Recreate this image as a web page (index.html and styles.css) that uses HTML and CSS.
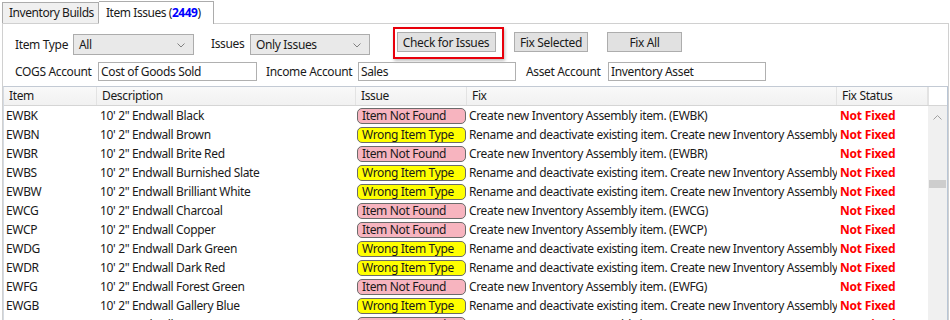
FILE: index.html
```html
<!DOCTYPE html>
<html>
<head>
<meta charset="utf-8">
<link rel="stylesheet" href="styles.css">
</head>
<body>
<div class="tabs">
  <div class="tab">Inventory Builds</div>
  <div class="tab tab-active">Item Issues (<b class="count">2449</b>)</div>
</div>
<div class="panel">
  <div class="row1">
    <span class="lbl lbl-type">Item Type</span>
    <div class="combo combo-type"><span>All</span><svg class="chev" width="8" height="5" viewBox="0 0 8 5"><polyline points="0.5,0.5 4,4 7.5,0.5" fill="none" stroke="#808080" stroke-width="1"/></svg></div>
    <span class="lbl lbl-issues">Issues</span>
    <div class="combo combo-issues"><span>Only Issues</span><svg class="chev" width="8" height="5" viewBox="0 0 8 5"><polyline points="0.5,0.5 4,4 7.5,0.5" fill="none" stroke="#808080" stroke-width="1"/></svg></div>
    <div class="mark"><button class="btn btn-check">Check for Issues</button></div>
    <button class="btn btn-sel">Fix Selected</button>
    <button class="btn btn-all">Fix All</button>
  </div>
  <div class="row2">
    <span class="lbl lbl-cogs">COGS Account</span>
    <div class="input in-cogs">Cost of Goods Sold</div>
    <span class="lbl lbl-income">Income Account</span>
    <div class="input in-income">Sales</div>
    <span class="lbl lbl-asset">Asset Account</span>
    <div class="input in-asset">Inventory Asset</div>
  </div>
  <div class="grid">
    <div class="ghead">
      <div class="c c-item">Item</div>
      <div class="c c-desc">Description</div>
      <div class="c c-issue">Issue</div>
      <div class="c c-fix">Fix</div>
      <div class="c c-status">Fix Status</div>
      <div class="c c-fill"></div>
    </div>
    <div class="gbody">
      <div class="rows">
        <div class="r"><div class="c c-item">EWBK</div><div class="c c-desc">10' 2" Endwall Black</div><div class="c c-issue"><span class="badge nf">Item Not Found</span></div><div class="c c-fix">Create new Inventory Assembly item. (EWBK)</div><div class="c c-status">Not Fixed</div></div>
        <div class="r"><div class="c c-item">EWBN</div><div class="c c-desc">10' 2" Endwall Brown</div><div class="c c-issue"><span class="badge wt">Wrong Item Type</span></div><div class="c c-fix">Rename and deactivate existing item. Create new Inventory Assembly</div><div class="c c-status">Not Fixed</div></div>
        <div class="r"><div class="c c-item">EWBR</div><div class="c c-desc">10' 2" Endwall Brite Red</div><div class="c c-issue"><span class="badge nf">Item Not Found</span></div><div class="c c-fix">Create new Inventory Assembly item. (EWBR)</div><div class="c c-status">Not Fixed</div></div>
        <div class="r"><div class="c c-item">EWBS</div><div class="c c-desc">10' 2" Endwall Burnished Slate</div><div class="c c-issue"><span class="badge wt">Wrong Item Type</span></div><div class="c c-fix">Rename and deactivate existing item. Create new Inventory Assembly</div><div class="c c-status">Not Fixed</div></div>
        <div class="r"><div class="c c-item">EWBW</div><div class="c c-desc">10' 2" Endwall Brilliant White</div><div class="c c-issue"><span class="badge wt">Wrong Item Type</span></div><div class="c c-fix">Rename and deactivate existing item. Create new Inventory Assembly</div><div class="c c-status">Not Fixed</div></div>
        <div class="r"><div class="c c-item">EWCG</div><div class="c c-desc">10' 2" Endwall Charcoal</div><div class="c c-issue"><span class="badge nf">Item Not Found</span></div><div class="c c-fix">Create new Inventory Assembly item. (EWCG)</div><div class="c c-status">Not Fixed</div></div>
        <div class="r"><div class="c c-item">EWCP</div><div class="c c-desc">10' 2" Endwall Copper</div><div class="c c-issue"><span class="badge nf">Item Not Found</span></div><div class="c c-fix">Create new Inventory Assembly item. (EWCP)</div><div class="c c-status">Not Fixed</div></div>
        <div class="r"><div class="c c-item">EWDG</div><div class="c c-desc">10' 2" Endwall Dark Green</div><div class="c c-issue"><span class="badge wt">Wrong Item Type</span></div><div class="c c-fix">Rename and deactivate existing item. Create new Inventory Assembly</div><div class="c c-status">Not Fixed</div></div>
        <div class="r"><div class="c c-item">EWDR</div><div class="c c-desc">10' 2" Endwall Dark Red</div><div class="c c-issue"><span class="badge wt">Wrong Item Type</span></div><div class="c c-fix">Rename and deactivate existing item. Create new Inventory Assembly</div><div class="c c-status">Not Fixed</div></div>
        <div class="r"><div class="c c-item">EWFG</div><div class="c c-desc">10' 2" Endwall Forest Green</div><div class="c c-issue"><span class="badge nf">Item Not Found</span></div><div class="c c-fix">Create new Inventory Assembly item. (EWFG)</div><div class="c c-status">Not Fixed</div></div>
        <div class="r"><div class="c c-item">EWGB</div><div class="c c-desc">10' 2" Endwall Gallery Blue</div><div class="c c-issue"><span class="badge wt">Wrong Item Type</span></div><div class="c c-fix">Rename and deactivate existing item. Create new Inventory Assembly</div><div class="c c-status">Not Fixed</div></div>
        <div class="r"><div class="c c-item">EWGH</div><div class="c c-desc">10' 2" Endwall Gray</div><div class="c c-issue"><span class="badge nf">Item Not Found</span></div><div class="c c-fix">Create new Inventory Assembly item. (EWGH)</div><div class="c c-status">Not Fixed</div></div>
      </div>
      <div class="vscroll">
        <svg class="up" width="9" height="5" viewBox="0 0 9 5"><polyline points="0.5,4.5 4.5,0.5 8.5,4.5" fill="none" stroke="#a0a0a0" stroke-width="1"/></svg>
        <div class="thumb"></div>
      </div>
    </div>
  </div>
</div>
</body>
</html>
```
FILE: styles.css
```css
* { box-sizing: border-box; }
html, body { margin: 0; padding: 0; background: #fff; overflow: hidden; }
body {
  width: 950px;
  height: 320px;
  font-family: "Noto Sans", "Open Sans", sans-serif;
  font-size: 12px;
  letter-spacing: -0.35px;
  color: #1a1a1a;
}
.tabs {
  display: flex;
  align-items: flex-end;
  height: 23px;
  padding-left: 2px;
}
.tab {
  height: 21px;
  width: 97px;
  padding-left: 6px;
  line-height: 19px;
  background: #f0f0f0;
  border: 1px solid #acacac;
  border-bottom: none;
  white-space: nowrap;
  letter-spacing: -0.45px;
}
.tab-active {
  height: 23px;
  width: 115px;
  line-height: 21px;
  background: #fff;
  border-left: none;
  padding-left: 7px;
  margin-bottom: -1px;
  position: relative;
  z-index: 1;
}
.count { color: #0000ff; font-weight: 700; }
.panel {
  margin-left: 2px;
  width: 947px;
  height: 300px;
  border: 1px solid #d0d0d0;
  border-bottom: none;
}
.row1 {
  display: flex;
  align-items: center;
  height: 34px;
  margin-top: 2px;
}
.lbl { white-space: nowrap; flex: none; }
.lbl-type { margin-left: 12px; width: 58px; margin-top: 2px; }
.lbl-issues { margin-left: 17px; width: 39px; }
.combo {
  flex: none;
  display: flex;
  align-items: center;
  justify-content: space-between;
  height: 21px;
  margin-top: 3px;
  padding: 0 8px 0 5px;
  background: #e9e9e9;
  border: 1px solid #acacac;
}
.combo span { line-height: 19px; }
.combo-type { width: 121px; }
.combo-issues { width: 120px; }
.chev { margin-top: 1px; }
.mark {
  flex: none;
  margin-left: 23px;
  width: 111px;
  height: 32px;
  border: 2px solid #e8000b;
  box-shadow: 1px 2px 3px rgba(0,0,0,0.25);
  display: flex;
  align-items: center;
  justify-content: center;
  padding-right: 5px;
  padding-bottom: 2px;
}
.btn {
  flex: none;
  font: inherit;
  letter-spacing: inherit;
  color: #1a1a1a;
  height: 20px;
  padding: 0;
  background: #e1e1e1;
  border: 1px solid #adadad;
  line-height: 17px;
  white-space: nowrap;
}
.btn-check { width: 99px; }
.btn-sel { width: 74px; margin-left: 10px; margin-top: -2px; }
.btn-all { width: 75px; margin-left: 19px; margin-top: -2px; }
.row2 {
  display: flex;
  align-items: center;
  height: 19px;
  margin-top: 2px;
}
.input {
  flex: none;
  height: 19px;
  border: 1px solid #b0b0b0;
  padding: 0 2px;
  line-height: 17px;
  white-space: nowrap;
}
.lbl-cogs { margin-left: 12px; width: 83px; }
.in-cogs { width: 159px; }
.lbl-income { margin-left: 9px; width: 92px; }
.in-income { width: 158px; }
.lbl-asset { margin-left: 10px; width: 82px; }
.in-asset { width: 158px; }
.grid {
  margin-top: 5px;
  border-top: 1px solid #c3cad4;
  border-right: 1px solid #b9c6d6;
  border-left: 1px solid #d5dbe3;
  height: 240px;
  overflow: hidden;
}
.ghead {
  display: flex;
  height: 19px;
  background: linear-gradient(#f9f9f9, #f1f1f1);
  border-bottom: 1px solid #d5d5d5;
}
.ghead .c {
  border-right: 1px solid #e3e3e3;
  padding-left: 5px;
  line-height: 18px;
}
.ghead .c-fill { background: #fff; border-right: none; border-left: 1px solid #e3e3e3; }
.c { flex: none; white-space: nowrap; overflow: hidden; }
.c-item { width: 93px; }
.c-desc { width: 259px; }
.c-issue { width: 111px; }
.c-fix { width: 370px; }
.c-status { width: 91px; }
.c-fill { width: 19px; }
.gbody { display: flex; }
.rows { width: 924px; }
.r { display: flex; height: 19px; line-height: 19px; }
.r .c-item { padding-left: 2px; }
.r .c-desc { padding-left: 3px; }
.r .c-issue { padding-left: 1px; padding-top: 2px; }
.r .c-fix { padding-left: 2px; }
.r .c-status { padding-left: 3px; color: #ff0000; font-weight: 700; font-size: 12px; letter-spacing: -0.2px; }
.badge {
  display: block;
  width: 109px;
  height: 16px;
  line-height: 14px;
  padding-left: 4px;
  border: 1px solid #6b6b6b;
  border-radius: 5px;
}
.nf { background: #f7b4bf; }
.wt { background: #ffff00; }
.vscroll {
  width: 19px;
  height: 220px;
  background: #f0f0f0;
  display: flex;
  flex-direction: column;
  align-items: center;
}
.up { margin-top: 9px; }
.thumb {
  width: 17px;
  height: 8px;
  background: #cdcdcd;
  margin-top: 60px;
}
```
